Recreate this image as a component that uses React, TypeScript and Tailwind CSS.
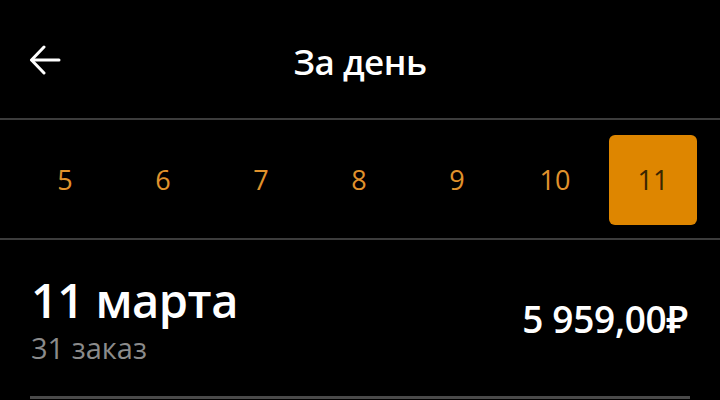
import React from "react";

const days = [5, 6, 7, 8, 9, 10, 11];

export default function App() {
    const selected = 11;

    return (
        <div
            className="w-[720px] h-[400px] bg-black text-white overflow-hidden"
            style={{ fontFamily: '"Open Sans", "Noto Sans", sans-serif' }}
        >
            {/* Header */}
            <div className="relative h-[118px] flex items-center justify-center pt-1">
                <svg
                    className="absolute left-[29px] top-[45px]"
                    width="32"
                    height="30"
                    viewBox="0 0 32 30"
                    fill="none"
                    stroke="white"
                    strokeWidth="3"
                    strokeLinecap="round"
                    strokeLinejoin="round"
                >
                    <path d="M30 15H3" />
                    <path d="M15 2L2.5 15L15 28" />
                </svg>
                <h1 className="text-[35px] font-semibold leading-none tracking-[-0.5px]">За день</h1>
            </div>
            <div className="h-[2px] bg-[#3c3c3c]" />

            {/* Days */}
            <div className="h-[118px] grid grid-cols-7 pl-[16px] pr-[18px] items-start pt-[15px]">
                {days.map((d) => (
                    <div key={d} className="flex justify-center">
                        <div
                            className={`w-[88px] h-[90px] rounded-[6px] flex items-center justify-center text-[27px] ${d === selected
                                    ? "bg-[#de8600] text-[#3a2600]"
                                    : "text-[#e0922c]"
                                }`}
                        >
                            {d}
                        </div>
                    </div>
                ))}
            </div>
            <div className="h-[2px] bg-[#3c3c3c]" />

            {/* Summary */}
            <div className="px-[31px] pt-[37px] flex items-start justify-between">
                <div>
                    <div className="text-[47px] font-semibold leading-none tracking-[-0.5px]">11 марта</div>
                    <div className="text-[29px] text-[#8b8b8b] leading-none mt-[9px]">31 заказ</div>
                </div>
                <div className="text-[37px] font-semibold leading-none mt-[23px] mr-[1px] tracking-[-0.3px]">5 959,00₽</div>
            </div>
            <div className="mx-[30px] mt-[34px] h-[3px] bg-[#4a4a4a]" />
        </div>
    );
}
